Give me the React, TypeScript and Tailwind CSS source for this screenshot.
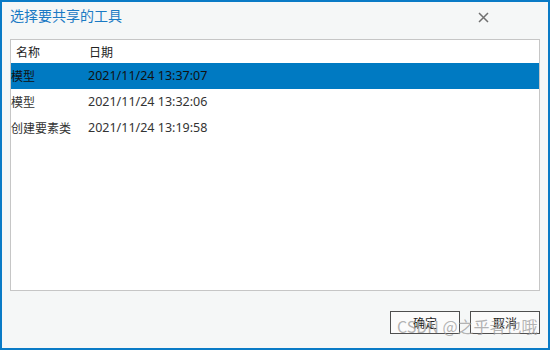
import React from "react";

const rows = [
  { name: "模型", date: "2021/11/24 13:37:07", sel: true },
  { name: "模型", date: "2021/11/24 13:32:06", sel: false },
  { name: "创建要素类", date: "2021/11/24 13:19:58", sel: false },
];

export default function App() {
  return (
    <div
      className="relative w-[550px] h-[350px] bg-[#f5f7f7] border-2 border-[#0a7bc6] flex flex-col"
      style={{ fontFamily: '"Noto Sans CJK SC", "Noto Sans", sans-serif' }}
    >
      <div className="h-[37px] flex items-start justify-between pl-[8px] pr-[59px] pt-[3px]">
        <span className="text-[14px] text-[#1a7ac4]">选择要共享的工具</span>
        <svg width="11" height="11" viewBox="0 0 11 11" className="mt-[7px]">
          <path d="M1 1 L10 10 M10 1 L1 10" stroke="#707070" strokeWidth="1.5" />
        </svg>
      </div>
      <div className="mx-[8px] h-[252px] bg-white border border-[#c6c6c6] flex flex-col">
        <div className="h-[23px] flex items-center text-[12px] text-[#222] pt-[1px]">
          <span className="w-[77px] pl-[5px]">名称</span>
          <span className="pl-[1px]">日期</span>
        </div>
        {rows.map((r, i) => (
          <div
            key={i}
            className={`h-[26px] flex items-center text-[12px] ${r.sel ? "bg-[#007ac2] text-[#111]" : "text-[#333]"}`}
          >
            <span className="w-[77px]">{r.name}</span>
            <span className="text-[12.5px]" style={{ fontFamily: '"Noto Sans", sans-serif' }}>{r.date}</span>
          </div>
        ))}
      </div>
      <div className="flex justify-end gap-[10px] pr-[8px] pt-[20px]">
        <button className="w-[70px] h-[23px] border border-[#4f4f4f] bg-[#fbfbfb] text-[12px] text-[#222]">确定</button>
        <button className="w-[70px] h-[23px] border border-[#4f4f4f] bg-[#fbfbfb] text-[12px] text-[#222]">取消</button>
      </div>
      <div className="absolute left-[395px] top-[312px] text-[16px] text-[#a0a0a0]/80 pointer-events-none">
        CSDN @之乎者也哦
      </div>
    </div>
  );
}
